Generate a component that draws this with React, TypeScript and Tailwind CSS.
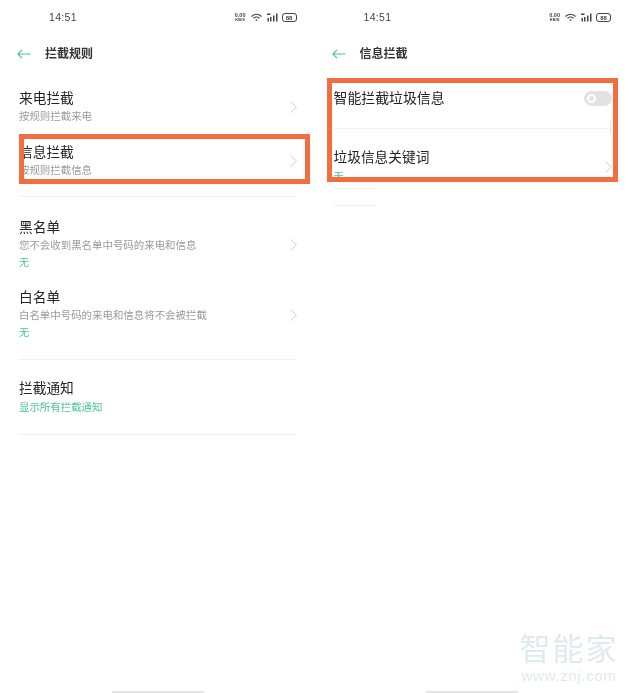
const FONT = "font-['Liberation_Sans','Noto_Sans_CJK_SC',sans-serif]";

function Chevron({ className = '' }: { className?: string }) {
  return (
    <svg className={className} width="9" height="14" viewBox="0 0 9 14" fill="none" stroke="#cfcfcf" strokeWidth="1">
      <path d="M1.5 1.5 7.5 7 1.5 12.5" />
    </svg>
  );
}

function StatusBar() {
  return (
    <div className="flex h-[34px] items-center pl-[49px] pr-[18px] pt-[1px]">
      <span className="text-[10.5px] leading-none tracking-[0.3px] text-[#444]">14:51</span>
      <div className="ml-auto flex items-center gap-[4px] text-[#444]">
        <div className="flex flex-col items-center text-[5.5px] font-bold leading-[5.5px]">
          <span>0.00</span>
          <span className="text-[4px] leading-[4px]">KB/S</span>
        </div>
        <svg width="13" height="9" viewBox="0 0 13 9" fill="none" stroke="#444" strokeWidth="1.1">
          <path d="M1.5 3.5C4.5.8 8.5.8 11.5 3.5M3.5 5.2C5.3 3.8 7.7 3.8 9.5 5.2" />
          <path d="M5.3 6.8c.8-.5 1.6-.5 2.4 0L6.5 8.3z" fill="#444" stroke="none" />
        </svg>
        <svg width="11" height="9" viewBox="0 0 11 9" fill="#444">
          <rect x="0" y="0.5" width="3.5" height="1.5" />
          <rect x="0.5" y="5" width="1.5" height="3.5" />
          <rect x="3" y="4" width="1.5" height="4.5" />
          <rect x="6" y="2.5" width="1.5" height="6" />
          <rect x="9" y="0.5" width="1.5" height="8" />
        </svg>
        <div className="flex h-[9px] w-[15px] items-center justify-center rounded-[3px] border border-[#444] text-[6px] font-bold leading-none">
          88
        </div>
      </div>
    </div>
  );
}

function NavBar({ title }: { title: string }) {
  return (
    <div className="flex h-[40px] items-center pl-[17px]">
      <svg width="14" height="10" viewBox="0 0 14 10" fill="none" stroke="#45c39b" strokeWidth="1.1">
        <path d="M13.5 5H1M5 .8 .9 5 5 9.2" />
      </svg>
      <span className="ml-[14px] text-[12px] font-bold leading-none text-[#333]">{title}</span>
    </div>
  );
}

interface RowProps {
  title: string;
  sub?: string;
  subGreen?: boolean;
  extra?: string;
  chevron?: boolean;
  chevronClass?: string;
  className?: string;
}

function Row({ title, sub, subGreen, extra, chevron = true, chevronClass = '', className = '' }: RowProps) {
  return (
    <div className={`flex items-center ${className}`}>
      <div className="min-w-0 flex-1">
        <div className="h-[20px] text-[13.7px] leading-[20px] text-[#222]">{title}</div>
        {sub && (
          <div className={`h-[16px] text-[10.45px] leading-[16px] ${subGreen ? 'mt-[1px] text-[#4cc49d]' : 'text-[#9a9a9a]'}`}>
            {sub}
          </div>
        )}
        {extra && <div className="mt-[1px] h-[16px] text-[10.3px] leading-[16px] text-[#4cc49d]">{extra}</div>}
      </div>
      {chevron && <Chevron className={chevronClass} />}
    </div>
  );
}

function Divider({ className = '' }: { className?: string }) {
  return <div className={`h-px bg-[#f0f0f0] ${className}`} />;
}

function HomeBar({ className = '' }: { className?: string }) {
  return <div className={`absolute bottom-0 h-[2px] w-[92px] bg-[#e4e4e4] ${className}`} />;
}

export default function App() {
  return (
    <div className={`relative grid h-[693px] w-[629px] grid-cols-2 overflow-hidden bg-white blur-[0.4px] ${FONT}`}>
      {/* 왼쪽 화면 */}
      <div className="relative">
        <StatusBar />
        <NavBar title="拦截规则" />
        <div className="pl-[19px] pr-[17px]">
          <Row title="来电拦截" sub="按规则拦截来电" className="mt-[15px]" />
          <Row title="信息拦截" sub="按规则拦截信息" className="mt-[18px]" />
          <Divider className="mr-[2px] mt-[17px]" />
          <Row title="黑名单" sub="您不会收到黑名单中号码的来电和信息" extra="无" className="mt-[21px]" />
          <Row title="白名单" sub="白名单中号码的来电和信息将不会被拦截" extra="无" className="mt-[17px]" />
          <Divider className="mr-[2px] mt-[18px]" />
          <Row title="拦截通知" sub="显示所有拦截通知" subGreen chevron={false} className="mt-[19px]" />
          <Divider className="mr-[2px] mt-[18px]" />
        </div>
        <HomeBar className="left-[112px]" />
        <div className="absolute left-[19px] top-[134px] h-[50px] w-[291px] border-[5px] border-[#f26e41]" />
      </div>

      {/* 오른쪽 화면 */}
      <div className="relative">
        <StatusBar />
        <NavBar title="信息拦截" />
        <div className="pl-[19px] pr-[18px]">
          <div className="mt-[14px] flex h-[20px] items-center justify-between">
            <span className="text-[13.9px] leading-[20px] text-[#222]">智能拦截垃圾信息</span>
            <div className="mr-[-1px] flex h-[15px] w-[28px] items-center rounded-full bg-[#e2e2e2] pl-[3px]">
              <div className="size-[9px] rounded-full border-2 border-white" />
            </div>
          </div>
          <Divider className="mr-[1px] mt-[20px]" />
          <Row title="垃圾信息关键词" extra="无" chevronClass="mr-[-2px]" className="mt-[19px]" />
          <Divider className="mt-[3px] w-[42px]" />
          <Divider className="mt-[16px] w-[42px]" />
        </div>
        <HomeBar className="left-[111px]" />
        <div className="absolute left-[295px] top-[121px] h-[12px] w-px bg-[#f3e6a0]" />
        <div className="absolute left-[12px] top-[78px] h-[104px] w-[291px] border-[5px] border-[#f26e41]" />
      </div>

      {/* 워터마크 */}
      <div className="absolute bottom-[9px] right-[10px] flex w-[100px] flex-col items-center text-[#dfeaec]">
        <span className="text-[31px] leading-[36px] tracking-[2px]">智能家</span>
        <span className="text-[15px] leading-[16px] tracking-[0.7px]">www.znj.com</span>
      </div>
    </div>
  );
}
